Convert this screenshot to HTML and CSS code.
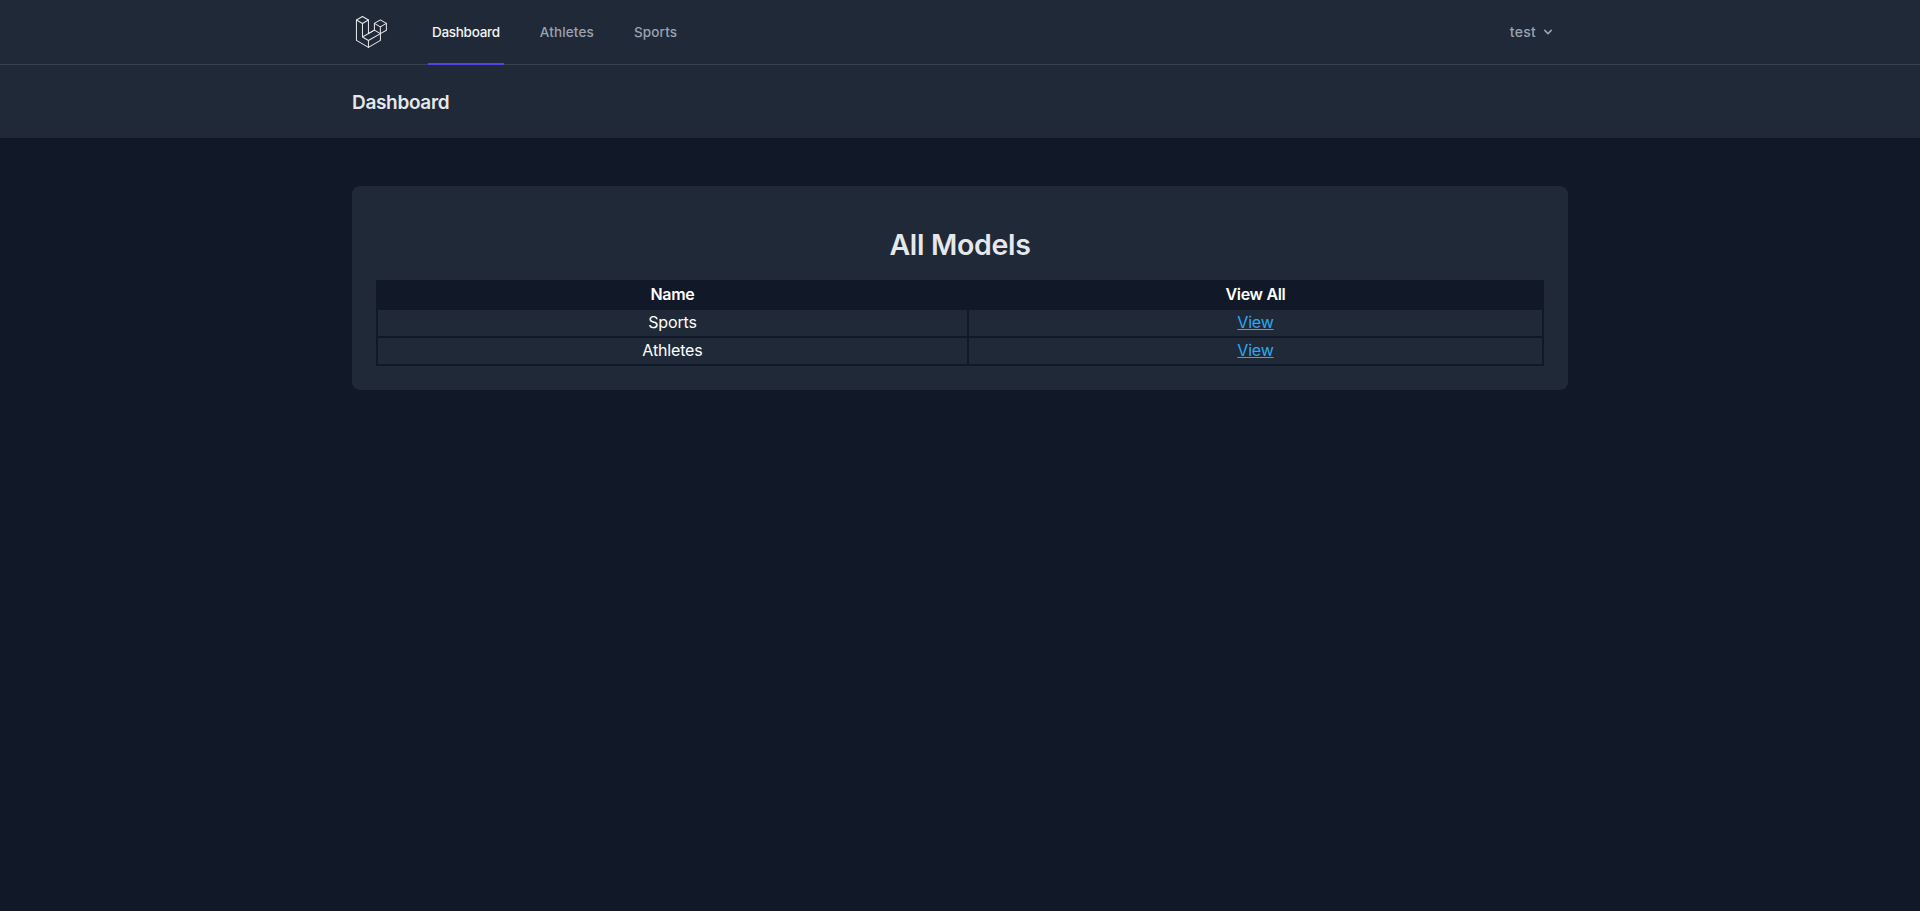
FILE: index.html
```html
<!DOCTYPE html>
<html lang="en">
<head>
<meta charset="utf-8">
<title>Dashboard</title>
<link rel="stylesheet" href="styles.css">
</head>
<body>
<nav class="nav">
  <div class="container nav-inner">
    <div class="nav-left">
      <a class="logo" href="#" aria-label="Home">
        <svg class="logo-svg" viewBox="0 0 316 316" fill="none" stroke="currentColor" stroke-width="9" stroke-linejoin="round" stroke-linecap="round">
          <path d="M39 52.5V232L144.3 293L249.4 232V172.5L301.8 142.2V82.3L249.1 52L196.6 82.3V142L144.4 172V52.5L91.8 22L39 52.5Z"/>
          <path d="M39 52.5L91.8 82.8L144.4 52.5M91.8 82.8V202L144.3 232V293M144.3 232L249.4 172.5L196.6 142L91.8 202"/>
          <path d="M196.6 82.3L249.1 112.6L301.8 82.3M249.1 112.6V172.5"/>
        </svg>
      </a>
      <div class="nav-links">
        <a class="nav-link active" href="#">Dashboard</a>
        <a class="nav-link" href="#">Athletes</a>
        <a class="nav-link" href="#">Sports</a>
      </div>
    </div>
    <button class="user-btn" type="button">
      <span>test</span>
      <svg class="chevron" viewBox="0 0 20 20" fill="currentColor"><path fill-rule="evenodd" clip-rule="evenodd" d="M5.293 7.293a1 1 0 011.414 0L10 10.586l3.293-3.293a1 1 0 111.414 1.414l-4 4a1 1 0 01-1.414 0l-4-4a1 1 0 010-1.414z"/></svg>
    </button>
  </div>
</nav>
<header class="page-header">
  <div class="container header-inner">
    <h2 class="page-title">Dashboard</h2>
  </div>
</header>
<main class="main">
  <div class="container">
    <section class="card">
      <h1 class="card-title">All Models</h1>
      <table class="models">
        <colgroup><col class="col-name"><col class="col-view"></colgroup>
        <thead>
          <tr><th>Name</th><th>View All</th></tr>
        </thead>
        <tbody>
          <tr><td>Sports</td><td><a class="view-link" href="#">View</a></td></tr>
          <tr><td>Athletes</td><td><a class="view-link" href="#">View</a></td></tr>
        </tbody>
      </table>
    </section>
  </div>
</main>
</body>
</html>
```
FILE: styles.css
```css
* { box-sizing: border-box; }
html, body { margin: 0; padding: 0; }
body {
  min-height: 911px;
  background: #111827;
  color: #f3f4f6;
  font-family: Inter, "Liberation Sans", sans-serif;
  font-size: 16px;
  line-height: 24px;
}
a { color: inherit; text-decoration: none; }
.container { width: 1280px; margin: 0 auto; padding: 0 32px; }

.nav { background: #1f2937; border-bottom: 1px solid #374151; height: 65px; }
.nav-inner { display: flex; justify-content: space-between; height: 64px; }
.nav-left { display: flex; }
.logo { display: flex; align-items: center; color: #e5e7eb; }
.logo-svg { width: 36px; height: 36px; display: block; }
.nav-links { display: flex; gap: 32px; margin: -1px 0 -1px 40px; height: 66px; }
.nav-link {
  display: inline-flex;
  align-items: center;
  padding: 2px 4px 0;
  border-bottom: 2px solid transparent;
  font-size: 13.5px;
  line-height: 20px;
  font-weight: 500;
  letter-spacing: 0.15px;
  color: #9ca3af;
}
.nav-link.active { color: #f3f4f6; border-bottom-color: #4f46e5; letter-spacing: -0.3px; }
.user-btn {
  display: flex;
  align-items: center;
  align-self: center;
  margin: 0;
  padding: 8px 12px;
  background: transparent;
  border: 1px solid transparent;
  border-width: 1px 0;
  font: inherit;
  font-size: 14px;
  line-height: 20px;
  font-weight: 500;
  letter-spacing: 0.25px;
  color: #9ca3af;
}
.chevron { width: 16px; height: 16px; margin-left: 4px; }

.page-header { background: #1f2937; box-shadow: 0 1px 2px rgba(0,0,0,.05); }
.header-inner { padding-top: 25px; padding-bottom: 23px; }
.page-title {
  margin: 0;
  font-size: 19px;
  line-height: 25px;
  font-weight: 600;
  letter-spacing: -0.33px;
  color: #e5e7eb;
}

.main { padding: 48px 0; }
.card { background: #1f2937; border-radius: 8px; padding: 24px; }
.card-title {
  margin: 0;
  height: 70px;
  display: flex;
  align-items: center;
  justify-content: center;
  font-size: 28.5px;
  line-height: 36px;
  font-weight: 600;
  letter-spacing: -0.3px;
  color: #e5e7eb;
}
.models { width: 100%; border-collapse: collapse; border: 2px solid #111827; }
.col-name { width: 50.68%; }
.col-view { width: 49.32%; }
.models th, .models td { padding: 0 1px 2px; text-align: center; color: #fff; }
.models th { background: #111827; border: 2px solid #111827; font-weight: 600; font-size: 16px; letter-spacing: -0.02em; }
.models td { border: 2px solid #111827; letter-spacing: -0.01em; }
.models .view-link { color: #2ea8f0; text-decoration: underline; }
```
